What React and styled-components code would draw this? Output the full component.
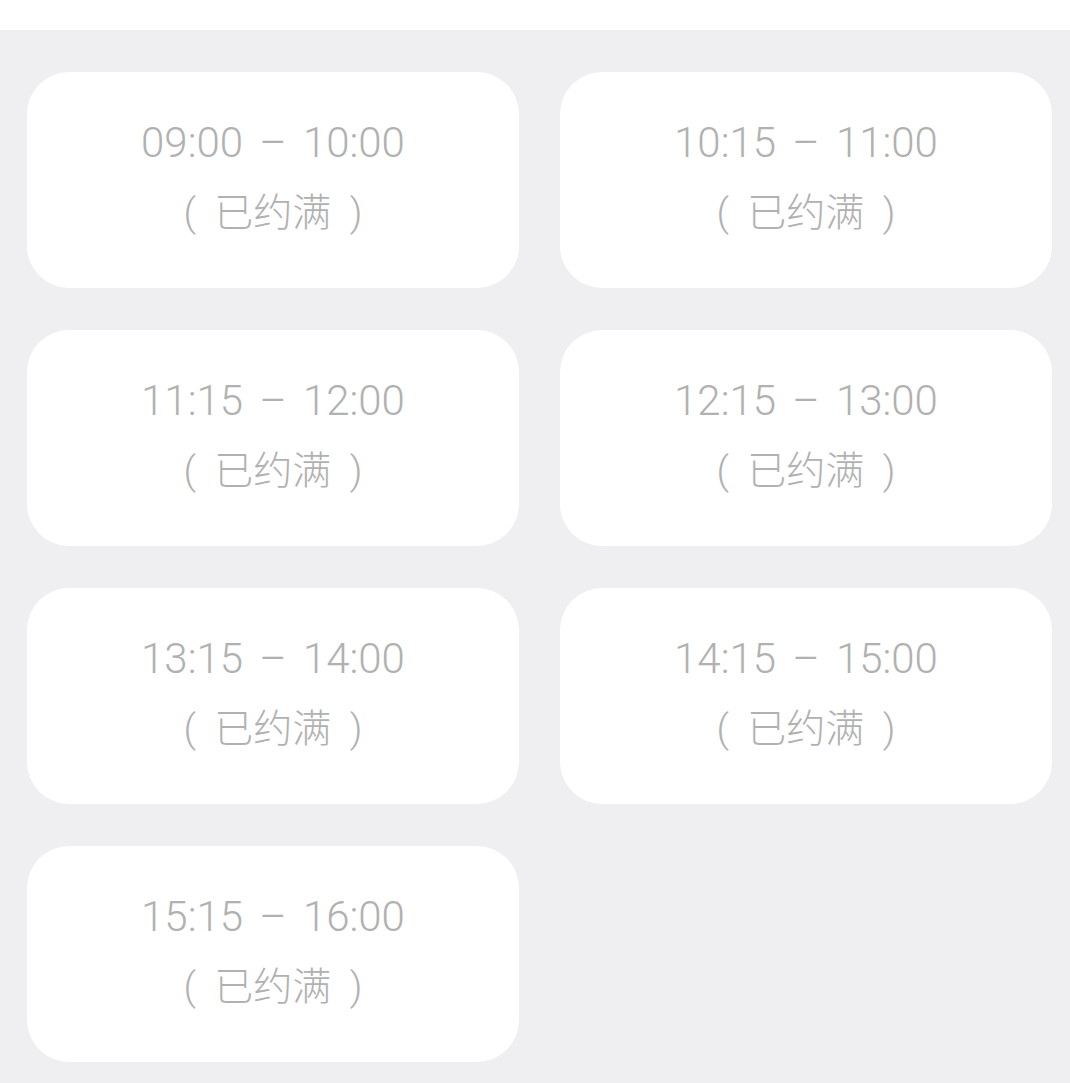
import React from 'react';
import styled, { createGlobalStyle } from 'styled-components';

const GlobalStyle = createGlobalStyle`
  html, body {
    margin: 0;
    padding: 0;
    background: #efeff2;
  }
  body {
    font-family: Roboto, "Noto Sans CJK SC", sans-serif;
  }
`;

const slots = [
  { start: '09:00', end: '10:00', full: true },
  { start: '10:15', end: '11:00', full: true },
  { start: '11:15', end: '12:00', full: true },
  { start: '12:15', end: '13:00', full: true },
  { start: '13:15', end: '14:00', full: true },
  { start: '14:15', end: '15:00', full: true },
  { start: '15:15', end: '16:00', full: true }
];

const App = () => (
  <>
    <GlobalStyle />
    <Page>
      <TopBar />
      <SlotGrid>
        {slots.map(slot => (
          <SlotCard key={slot.start} disabled={slot.full}>
            <TimeRange>
              {slot.start} – {slot.end}
            </TimeRange>
            {slot.full && <Status>( 已约满 )</Status>}
          </SlotCard>
        ))}
      </SlotGrid>
    </Page>
  </>
);

export default App;

const Page = styled.div`
  min-height: 1083px;
  background: #efeff2;
`;

const TopBar = styled.div`
  height: 30px;
  background: #ffffff;
`;

const SlotGrid = styled.div`
  display: grid;
  grid-template-columns: 492px 492px;
  column-gap: 41px;
  row-gap: 42px;
  padding: 42px 18px 22px 27px;
`;

const SlotCard = styled.div`
  height: 216px;
  background: #fff;
  border-radius: 42px;
  display: flex;
  flex-direction: column;
  align-items: center;
  justify-content: center;
  padding-bottom: 4px;
  box-sizing: border-box;
  color: ${({ disabled }) => (disabled ? '#b1b1b1' : '#333')};
`;

const TimeRange = styled.div`
  font-size: 42px;
  font-weight: 300;
  line-height: 70px;
  word-spacing: 6px;
`;

const Status = styled.div`
  font-size: 39px;
  font-weight: 300;
  line-height: 70px;
  word-spacing: 9px;
`;
